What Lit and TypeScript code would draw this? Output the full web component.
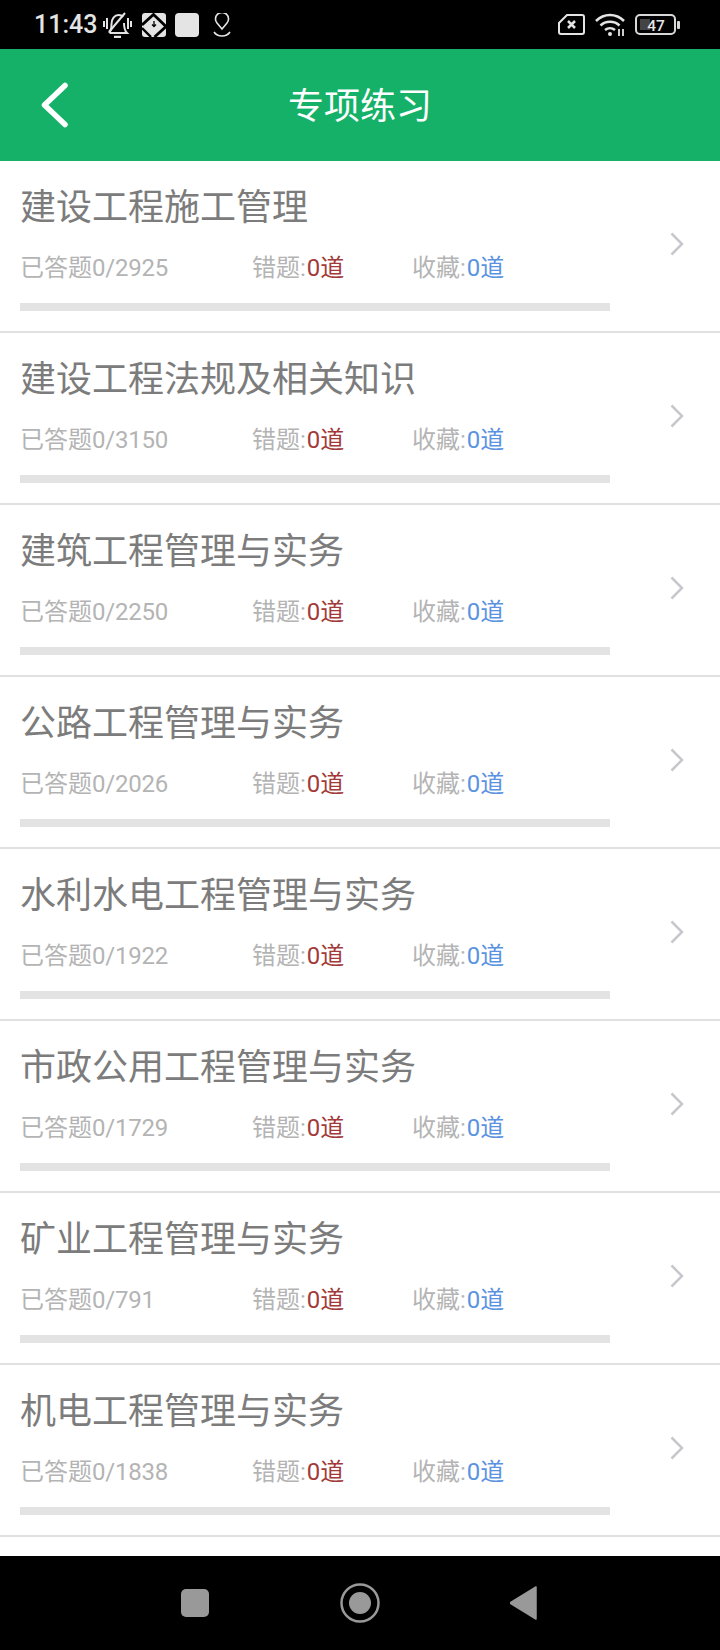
import { LitElement, html, css } from 'lit';
import { customElement } from 'lit/decorators.js';

const subjects = [
  { name: '建设工程施工管理', total: 2925 },
  { name: '建设工程法规及相关知识', total: 3150 },
  { name: '建筑工程管理与实务', total: 2250 },
  { name: '公路工程管理与实务', total: 2026 },
  { name: '水利水电工程管理与实务', total: 1922 },
  { name: '市政公用工程管理与实务', total: 1729 },
  { name: '矿业工程管理与实务', total: 791 },
  { name: '机电工程管理与实务', total: 1838 },
];

@customElement('app-root')
export class AppRoot extends LitElement {
  static styles = css`
    :host {
      display: block;
      width: 720px;
      height: 1650px;
      background: #fff;
      font-family: Roboto, 'Noto Sans CJK SC', sans-serif;
    }

    .screen {
      width: 720px;
      height: 1650px;
      display: flex;
      flex-direction: column;
      overflow: hidden;
    }

    .status {
      height: 49px;
      flex-shrink: 0;
      background: #000;
      color: #e4e4e4;
      display: flex;
      align-items: center;
      justify-content: space-between;
      padding: 0 39px 0 34px;
      box-sizing: border-box;
    }

    .status-group {
      display: flex;
      align-items: center;
    }

    .time {
      font-size: 25px;
      font-weight: 500;
      line-height: 28px;
      width: 68px;
    }

    .status svg {
      display: block;
    }

    .bell {
      margin-right: 10px;
    }

    .marker {
      margin-right: 9px;
    }

    .square {
      width: 24px;
      height: 24px;
      border-radius: 4px;
      background: #e4e4e4;
      margin-right: 14px;
    }

    .sim,
    .wifi {
      margin-right: 10px;
    }

    .header {
      height: 112px;
      flex-shrink: 0;
      background: #15b168;
      display: flex;
      align-items: center;
      justify-content: center;
      position: relative;
      color: #fff;
      font-size: 36px;
      font-weight: 400;
      padding-bottom: 4px;
      box-sizing: border-box;
    }

    .back {
      position: absolute;
      left: 40px;
      top: 31px;
    }

    .list {
      flex: 1;
      overflow: hidden;
    }

    .row {
      height: 172px;
      box-sizing: border-box;
      border-bottom: 2px solid #e0e0e0;
      padding: 0 0 0 20px;
      display: flex;
      align-items: flex-start;
      justify-content: space-between;
    }

    .body {
      width: 590px;
      display: flex;
      flex-direction: column;
    }

    .name {
      font-size: 36px;
      line-height: 48px;
      color: #7c7c7c;
      margin-top: 23px;
      font-weight: 400;
    }

    .stats {
      display: grid;
      grid-template-columns: 232px 160px auto;
      font-size: 24px;
      line-height: 32px;
      color: #b4b4b4;
      margin-top: 20px;
    }

    .count {
      letter-spacing: -0.2px;
    }

    .wrong {
      color: #a33a3a;
      margin-left: 1px;
    }

    .fav {
      color: #5b93e2;
      margin-left: 1px;
    }

    .track {
      height: 8px;
      background: #e3e3e3;
      margin-top: 19px;
    }

    .chevron {
      margin: 71px 36px 0 0;
      display: block;
    }

    .nav {
      height: 94px;
      flex-shrink: 0;
      background: #000;
      display: flex;
      align-items: center;
      justify-content: center;
      gap: 130px;
    }

    .nav svg {
      display: block;
    }
  `;

  private renderStatus() {
    return html`
      <div class="status">
        <div class="status-group">
          <span class="time">11:43</span>
          <svg class="bell" width="30" height="26" viewBox="0 0 30 26" fill="none" stroke="#e4e4e4" stroke-width="2">
            <path d="M7 21c2-2 2.500-5 2.500-9 0-5 3-9 7-9 2 0 3.500 .5 4.500 2M22 11c0 5 1 8 3 10H8" />
            <path d="M7 20 23 1" />
            <path d="M2 9v6M5 6v11M26 6v11M29 9v6" />
            <path d="M12 25h7" stroke-width="2.500" />
          </svg>
          <svg class="marker" width="24" height="24" viewBox="0 0 24 24">
            <rect width="24" height="24" rx="3" fill="#e4e4e4" />
            <path d="M0 12 11.500 1.500 24 13.500 12.500 24" fill="none" stroke="#000" stroke-width="2.800" />
            <path d="M0 15 9 24" fill="none" stroke="#000" stroke-width="2.400" />
            <path d="M12 8v5M10 11.500l2 2 2-2" stroke="#000" stroke-width="1.300" fill="none" />
          </svg>
          <div class="square"></div>
          <svg width="18" height="24" viewBox="0 0 18 24" fill="none" stroke="#e4e4e4" stroke-width="1.600">
            <path d="M9 16 4 10a6.500 6.500 0 1 1 10 0Z" />
            <path d="M1 19c2 3 5 4 8 4s6-1 8-4" />
          </svg>
        </div>
        <div class="status-group">
          <svg class="sim" width="27" height="21" viewBox="0 0 27 21" fill="none" stroke="#e4e4e4" stroke-width="2">
            <path d="M9 1h15a2 2 0 0 1 2 2v15a2 2 0 0 1-2 2H3a2 2 0 0 1-2-2V9Z" />
            <path d="M10 7l7 7M17 7l-7 7" stroke-width="2.500" />
          </svg>
          <svg class="wifi" width="30" height="24" viewBox="0 0 30 24" fill="none" stroke="#e4e4e4" stroke-width="2.500">
            <path d="M1 8c8-8 20-8 28 0M5.500 12.500c5-5 14-5 19 0M10 17c3-2.500 7-2.500 10 0" />
            <circle cx="15" cy="21" r="2" fill="#e4e4e4" stroke="none" />
            <path d="M24 16v7M28 16v7" stroke-width="1.800" />
          </svg>
          <svg width="46" height="22" viewBox="0 0 46 22">
            <rect x="1" y="1" width="39" height="19" rx="4" fill="none" stroke="#d8d8d8" stroke-width="2" />
            <rect x="5" y="5" width="10" height="11" fill="#444" />
            <rect x="42" y="7" width="3" height="8" rx="1" fill="#d8d8d8" />
            <text x="21" y="16.500" text-anchor="middle" font-size="15.500" font-weight="500" font-family="Roboto, sans-serif" fill="#e4e4e4">47</text>
          </svg>
        </div>
      </div>
    `;
  }

  private renderRow(s: { name: string; total: number }) {
    return html`
      <div class="row">
        <div class="body">
          <div class="name">${s.name}</div>
          <div class="stats">
            <span>已答题<span class="count">0/${s.total}</span></span>
            <span>错题:<span class="wrong">0道</span></span>
            <span>收藏:<span class="fav">0道</span></span>
          </div>
          <div class="track"></div>
        </div>
        <svg class="chevron" width="14" height="24" viewBox="0 0 14 24" fill="none" stroke="#c8c8cc" stroke-width="2.500">
          <path d="M1.500 1.500 12 12 1.500 22.500" />
        </svg>
      </div>
    `;
  }

  render() {
    return html`
      <div class="screen">
        ${this.renderStatus()}
        <div class="header">
          <svg class="back" width="28" height="50" viewBox="0 0 28 50" fill="none" stroke="#fff" stroke-width="5.500" stroke-linecap="round" stroke-linejoin="round">
            <path d="M25 5.500 4.500 25 25 44.500" />
          </svg>
          专项练习
        </div>
        <div class="list">${subjects.map((s) => this.renderRow(s))}</div>
        <div class="nav">
          <svg width="30" height="30" viewBox="0 0 30 30"><rect x="1" y="1" width="28" height="28" rx="5" fill="#999" /></svg>
          <svg width="40" height="40" viewBox="0 0 40 40">
            <circle cx="20" cy="20" r="18.500" fill="none" stroke="#999" stroke-width="2.500" />
            <circle cx="20" cy="20" r="11" fill="#999" />
          </svg>
          <svg width="30" height="34" viewBox="0 0 30 34"><path d="M0 17 26 1V33Z" fill="#999" stroke="#999" stroke-width="1.500" stroke-linejoin="round" /></svg>
        </div>
      </div>
    `;
  }
}

declare global {
  interface HTMLElementTagNameMap {
    'app-root': AppRoot;
  }
}
